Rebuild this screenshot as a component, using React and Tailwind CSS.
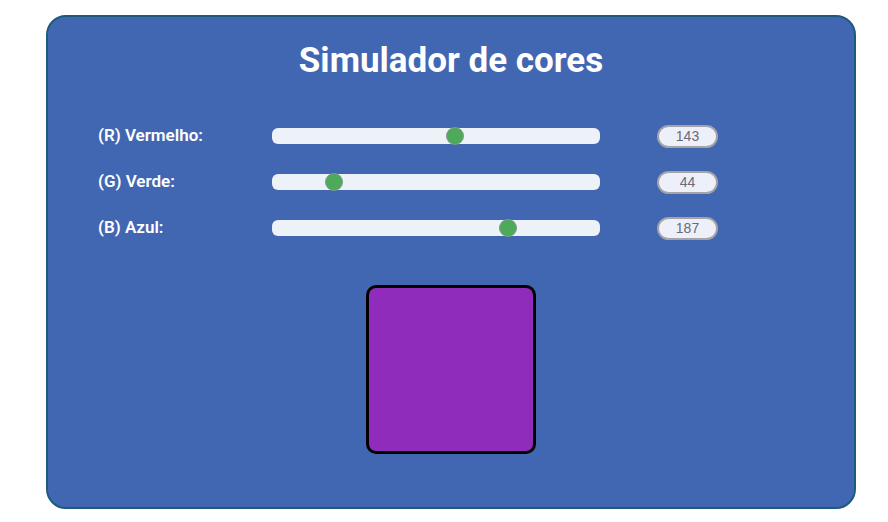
import React, { useState } from 'react';

const Row = ({ label, value, setValue }) => (
    <div className="flex items-center h-[22px]">
        <label className="w-[174px] text-white text-[17px] font-semibold">{label}</label>
        <input
            type="range"
            min="0"
            max="255"
            value={value}
            onChange={(e) => setValue(Number(e.target.value))}
            className="w-[328px] h-4 appearance-none bg-[#edf1f8] rounded-md outline-none [&::-webkit-slider-thumb]:appearance-none [&::-webkit-slider-thumb]:w-[18px] [&::-webkit-slider-thumb]:h-[18px] [&::-webkit-slider-thumb]:rounded-full [&::-webkit-slider-thumb]:bg-[#4caa5a] [&::-webkit-slider-thumb]:border [&::-webkit-slider-thumb]:border-[#7f9a87]"
        />
        <input
            type="text"
            value={value}
            readOnly
            className="ml-[57px] w-[61px] h-[23px] rounded-full bg-[#edf0f8] border-2 border-[#a3a3a8] text-center text-[14px] text-[#6a6a78] font-['Liberation_Sans',sans-serif] outline-none"
        />
    </div>
);

export default function App() {
    const [r, setR] = useState(143);
    const [g, setG] = useState(44);
    const [b, setB] = useState(187);

    return (
        <div className="bg-white w-[888px] h-[522px] pt-[15px] font-['Roboto',sans-serif]">
            <div className="ml-[46px] w-[810px] h-[494px] bg-[#4267b2] border-2 border-[#1d5a7c] rounded-[20px] pt-[24px] px-[50px]">
                <h1 className="text-center text-white text-[35px] font-bold leading-[40px]">Simulador de cores</h1>
                <div className="mt-[44px] flex flex-col gap-[24px]">
                    <Row label="(R) Vermelho:" value={r} setValue={setR} />
                    <Row label="(G) Verde:" value={g} setValue={setG} />
                    <Row label="(B) Azul:" value={b} setValue={setB} />
                </div>
                <div className="mt-[46px] flex justify-center">
                    <div
                        className="w-[170px] h-[169px] border-[3px] border-black rounded-[10px]"
                        style={{ backgroundColor: `rgb(${r}, ${g}, ${b})` }}
                    />
                </div>
            </div>
        </div>
    );
}
